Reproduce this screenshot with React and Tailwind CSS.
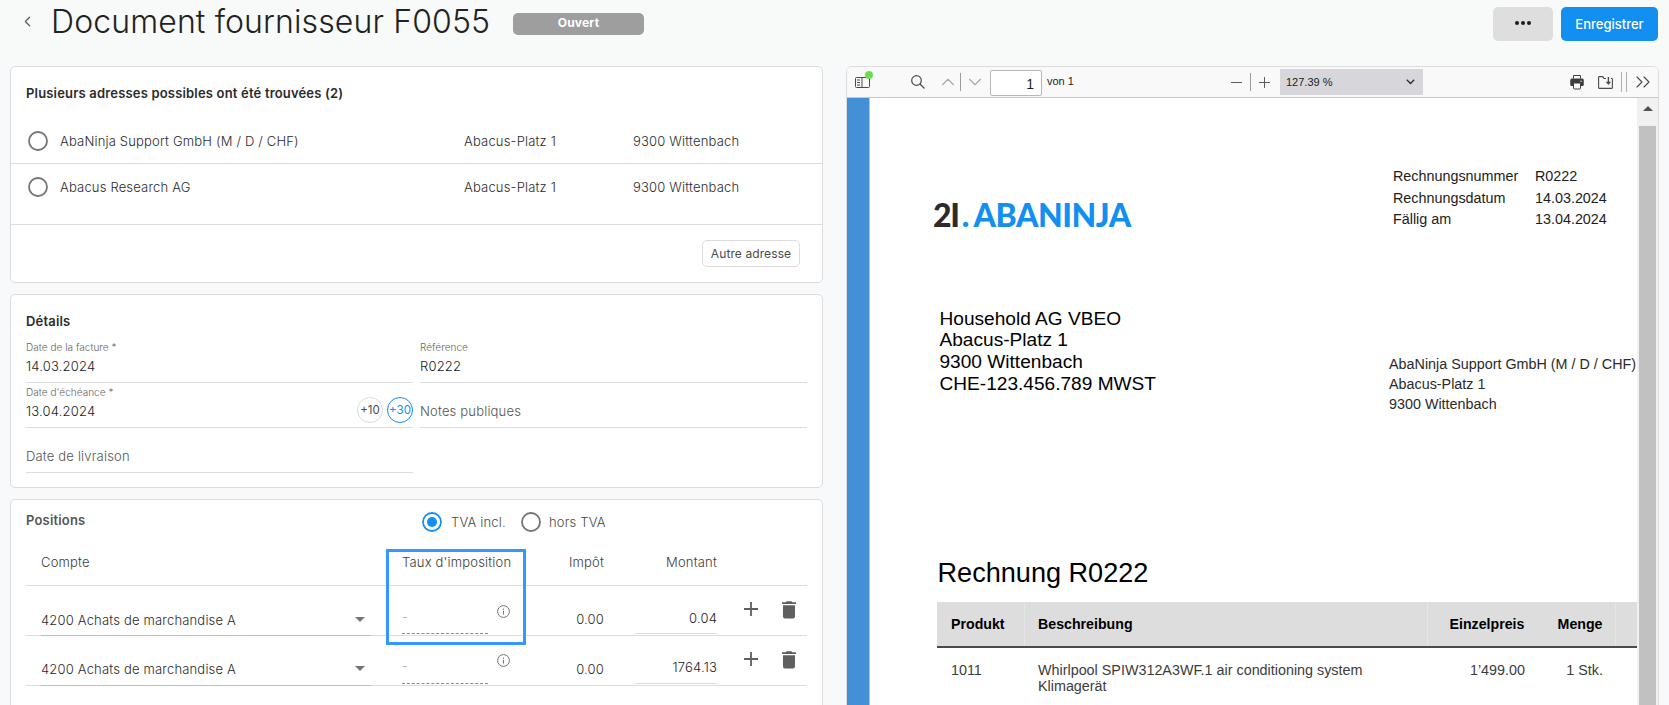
import React from 'react';
import { ChevronLeft, ChevronUp, ChevronDown, ChevronsRight } from 'lucide-react';

const addresses = [
  { id: 1, name: 'AbaNinja Support GmbH (M / D / CHF)', street: 'Abacus-Platz 1', city: '9300 Wittenbach' },
  { id: 2, name: 'Abacus Research AG', street: 'Abacus-Platz 1', city: '9300 Wittenbach' },
];

const positions = [
  { id: 1, account: '4200 Achats de marchandise A', tax: '0.00', amount: '0.04' },
  { id: 2, account: '4200 Achats de marchandise A', tax: '0.00', amount: '1764.13' },
];

const Radio = ({ checked }) => (
  <svg viewBox="0 0 24 24" className={`size-6 shrink-0 ${checked ? 'text-[#138ff2]' : 'text-[#757575]'}`}>
    <circle cx="12" cy="12" r="9" fill="none" stroke="currentColor" strokeWidth="1.8" />
    {checked && <circle cx="12" cy="12" r="5" fill="currentColor" />}
  </svg>
);

const Field = ({ label, value, placeholder, children }) => (
  <div className="flex h-[45px] items-end justify-between border-b border-[#dcdcdc]">
    <div className="pb-[6px]">
      {label && <div className="mb-[2px] text-[10px] leading-[14px] tracking-[0.04px] text-[#666]">{label}</div>}
      <div className={`leading-5 ${placeholder ? 'text-[#555]' : 'text-[#1c1c1c]'}`}>{value || placeholder}</div>
    </div>
    {children}
  </div>
);

const InfoIcon = () => (
  <svg viewBox="0 0 13 13" className="size-[13px]" fill="none" stroke="#757575">
    <circle cx="6.5" cy="6.5" r="5.9" strokeWidth="1" />
    <path d="M6.5 5.7v3.8M6.5 3.5v1.2" strokeWidth="1.1" />
  </svg>
);

const TrashIcon = () => (
  <svg viewBox="0 0 14 18" className="h-[18px] w-[14px]" fill="#5f5f5f">
    <path d="M0 1.2h3.6L4.6.2h4.8l1 1H14v1.9H0zM1 4.3h12v11.2a2 2 0 0 1-2 2H3a2 2 0 0 1-2-2z" />
  </svg>
);

const PlusIcon = () => (
  <svg viewBox="0 0 14 14" className="size-[14px]" stroke="#5f5f5f" strokeWidth="1.8">
    <path d="M7 0v14M0 7h14" />
  </svg>
);

const AddressCard = () => (
  <section className="h-[217px] rounded-[5px] border border-[#dcdcdc] bg-white">
    <h2 className="px-[15px] pt-4 font-semibold leading-5 text-[#2b2b2b]">
      Plusieurs adresses possibles ont été trouvées (2)
    </h2>
    <div className="mt-4 border-b border-[#dcdcdc] pb-[15px]">
      {addresses.map((a, i) => (
        <div
          key={a.id}
          className={`grid h-[45px] grid-cols-[34px_404px_169px_1fr] items-center pl-[15px] leading-5 text-[#2b2b2b] ${i === 0 ? 'border-b border-[#dcdcdc]' : ''}`}
        >
          <Radio />
          <span>{a.name}</span>
          <span>{a.street}</span>
          <span>{a.city}</span>
        </div>
      ))}
    </div>
    <div className="flex justify-end pr-[22px] pt-[15px]">
      <button className="h-[27px] w-[98px] rounded-[5px] border border-[#dcdcdc] text-[12px] font-normal tracking-[0.1px] text-[#4a4a4a]">
        Autre adresse
      </button>
    </div>
  </section>
);

const DetailsCard = () => (
  <section className="h-[194px] rounded-[5px] border border-[#dcdcdc] bg-white px-[15px] pt-4">
    <h2 className="font-semibold leading-5 text-[#2b2b2b]">Détails</h2>
    <div className="mt-[7px] grid grid-cols-[387px_387px] gap-x-[7px]">
      <Field label="Date de la facture *" value="14.03.2024" />
      <Field label="Référence" value="R0222" />
      <Field label="Date d'échéance *" value="13.04.2024">
        <div className="flex gap-1 pb-1 text-[11.5px] font-normal tracking-normal">
          <span className="flex size-[26px] items-center justify-center rounded-full border border-[#dcdcdc] pt-px text-[#4a4a4a]">+10</span>
          <span className="flex size-[26px] items-center justify-center rounded-full border border-[#138ff2] pt-px text-[#138ff2]">+30</span>
        </div>
      </Field>
      <Field placeholder="Notes publiques" />
      <Field placeholder="Date de livraison" />
    </div>
  </section>
);

const columns = 'grid grid-cols-[345px_131px_87px_31px_82px_1fr] pl-[15px]';

const PositionsCard = () => (
  <section className="relative h-[240px] rounded-[5px] border border-[#dcdcdc] bg-white px-[15px]">
    <div className="flex h-10 items-center text-[#4a4a4a]">
      <h2 className="mt-px w-[394px] font-semibold text-[#555]">Positions</h2>
      <div className="mt-1 flex items-center">
        <Radio checked />
        <span className="ml-[7px] mt-px w-[68px]">TVA incl.</span>
        <Radio />
        <span className="ml-[6px] mt-px">hors TVA</span>
      </div>
    </div>

    <div className={`${columns} h-[46px] items-center border-b border-[#dcdcdc] pt-px text-[#3c3c3c]`}>
      <span>Compte</span>
      <span className="pl-4 whitespace-nowrap">Taux d'imposition</span>
      <span className="text-right">Impôt</span>
      <span />
      <span className="text-right">Montant</span>
    </div>

    {positions.map((p, i) => (
      <div key={p.id} className={`${columns} h-[50px] border-b border-[#dcdcdc] text-[#2b2b2b]`}>
        <div className={`-mb-px mr-[15px] flex justify-between border-b border-[#bdbdbd] ${i === 0 ? 'pt-6' : 'pt-[23px]'}`}>
          <span className="leading-5">{p.account}</span>
          <svg viewBox="0 0 10 5" className="mr-[6px] mt-[7px] h-[5px] w-[10px]" fill="#757575">
            <path d="M0 0h10L5 5z" />
          </svg>
        </div>
        <div className={`flex justify-between pl-4 pr-[7px] ${i === 0 ? 'pt-[19px]' : 'pt-[18px]'}`}>
          <div className="mb-[1px] w-[86px] border-b border-dashed border-[#8c8c8c] leading-6 text-[#aaa]">-</div>
          <InfoIcon />
        </div>
        <span className="pt-[23px] text-right leading-5">{p.tax}</span>
        <span />
        <span className={`mb-px border-b border-[#dcdcdc] text-right leading-5 text-[#1c1c1c] ${i === 0 ? 'pt-[22px]' : 'pt-[21px]'}`}>
          {p.amount}
        </span>
        <div className="flex gap-6 pl-[27px] pt-[15px]">
          <div className="pt-px">
            <PlusIcon />
          </div>
          <TrashIcon />
        </div>
      </div>
    ))}

    {/* Cadre autour du taux d'imposition */}
    <div className="absolute left-[375px] top-[49px] h-[96px] w-[140px] border-[3px] border-[#3399ff]" />
  </section>
);

const Toolbar = () => (
  <div className="flex h-[31px] items-center border-b border-[#c8c8c8] bg-[#f9f9fa] font-['Liberation_Sans',sans-serif] text-[11px] font-normal tracking-normal text-[#1c1c1c]">
    <div className="relative ml-2 h-[11px] w-[15px]">
      <svg viewBox="0 0 15 11" className="h-[11px] w-[15px]" fill="none" stroke="#4a4a4a">
        <rect x=".5" y=".5" width="14" height="10" rx="1" />
        <path d="M7 0v11M2 3h3M2 5.5h3M2 8h3" />
      </svg>
      <span className="absolute -right-[3px] -top-[6px] size-2 rounded-full bg-[#70db55]" />
    </div>
    <svg viewBox="0 0 14 14" className="ml-[41px] size-[14px]" fill="none" stroke="#4a4a4a" strokeWidth="1.2">
      <circle cx="5.5" cy="5.5" r="4.8" />
      <path d="M9 9l4.5 4.5" />
    </svg>
    <ChevronUp className="ml-3 h-[22px] w-[22px] text-[#a8a8a8]" strokeWidth={1.2} />
    <span className="ml-[1px] h-[18px] w-px bg-[#9c9c9c]" />
    <ChevronDown className="ml-[3px] h-[22px] w-[22px] text-[#a8a8a8]" strokeWidth={1.2} />
    <div className="ml-1 mt-[2px] flex h-[26px] w-[52px] items-center justify-end rounded-[2px] border border-[#b8b8bb] bg-white pr-[7px] pt-[2px] text-[14px]">1</div>
    <span className="-mt-px ml-[5px] w-[184px]">von 1</span>
    <span className="mt-px h-px w-[11px] bg-[#5c5c5c]" />
    <span className="ml-2 h-[18px] w-px bg-[#9c9c9c]" />
    <svg viewBox="0 0 11 11" className="ml-2 mt-px size-[11px]" stroke="#5c5c5c">
      <path d="M5.5 0v11M0 5.5h11" />
    </svg>
    <div className="ml-[10px] flex h-[26px] w-[143px] items-center justify-between bg-[#d7d7db] pl-[6px] pr-2">
      <span>127.39 %</span>
      <svg viewBox="0 0 9 6" className="h-[6px] w-[9px]" fill="none" stroke="#2b2b2b" strokeWidth="1.3">
        <path d="M.8.8l3.7 3.7L8.2.8" />
      </svg>
    </div>
    <svg viewBox="0 0 14 16" className="ml-[147px] h-4 w-[14px]">
      <path d="M3.5 4.5V1.5h7v3M1 5h12v6.5H1z" fill="none" stroke="#3c3c3c" strokeLinejoin="round" />
      <rect x=".5" y="5" width="13" height="7" rx="1.5" fill="#3c3c3c" />
      <rect x="3.5" y="9" width="7" height="6" rx="1" fill="#f9f9fa" stroke="#3c3c3c" />
      <circle cx="11" cy="7.3" r=".7" fill="#f9f9fa" />
    </svg>
    <svg viewBox="0 0 15 13" className="ml-[14px] h-[13px] w-[15px]" fill="none" stroke="#4a4a4a" strokeWidth="1.1">
      <path d="M8 2.5H6L4.8.6H1.2a.6.6 0 0 0-.6.6v10.6c0 .4.2.6.6.6h12.6c.4 0 .6-.2.6-.6V3.1c0-.4-.2-.6-.6-.6H13" />
      <path d="M10.4 1v6" strokeWidth="1.4" />
      <path d="M7.7 5.8h5.4L10.4 9z" fill="#4a4a4a" stroke="none" />
    </svg>
    <span className="ml-2 h-5 w-px bg-[#b0b0b0]" />
    <span className="ml-1 h-5 w-px bg-[#b0b0b0]" />
    <ChevronsRight className="ml-1 h-6 w-6 text-[#4a4a4a]" strokeWidth={1.1} />
  </div>
);

const Invoice = () => (
  <div className="w-[767px] shrink-0 overflow-hidden bg-white font-['Liberation_Sans',sans-serif] text-[14.35px] font-normal tracking-normal text-black">
    <div className="flex h-[194px] items-start justify-between pt-[68px]">
      <div className="mt-[30px] flex whitespace-nowrap pl-[63px] font-['Lato',sans-serif] text-[32px] font-black leading-[38px]">
        <span className="tracking-[-1.2px] text-[#2b2b2b]">2I</span>
        <span className="ml-[3px] text-[#138ff2]">.</span>
        <span className="ml-[4px] tracking-[-0.45px] text-[#138ff2]">ABANINJA</span>
      </div>
      <div className="grid w-[244px] grid-cols-[142px_1fr] leading-[21.7px] text-[#1c1c1c]">
        <span>Rechnungsnummer</span>
        <span>R0222</span>
        <span>Rechnungsdatum</span>
        <span>14.03.2024</span>
        <span>Fällig am</span>
        <span>13.04.2024</span>
      </div>
    </div>

    <div className="flex h-[258px] justify-between">
      <div className="pl-[69.5px] pt-[15.7px] text-[19.1px] leading-[21.7px]">
        <div>Household AG VBEO</div>
        <div>Abacus-Platz 1</div>
        <div>9300 Wittenbach</div>
        <div>CHE-123.456.789 MWST</div>
      </div>
      <div className="w-[248px] whitespace-nowrap pt-[62px] leading-5 text-[#2b2b2b]">
        <div>AbaNinja Support GmbH (M / D / CHF)</div>
        <div>Abacus-Platz 1</div>
        <div>9300 Wittenbach</div>
      </div>
    </div>

    <h1 className="h-[52px] pl-[67.5px] pt-[7px] text-[27.1px] leading-8">Rechnung R0222</h1>

    <div className="ml-[67px]">
      <div className="grid h-[46px] grid-cols-[88px_403px_188px_1fr] border-b-2 border-[#4a4a4a] bg-[#ddd] text-[14.2px] font-bold leading-[44px]">
        <span className="border-r border-[#e6e6e6] pl-[14px]">Produkt</span>
        <span className="border-r border-[#e6e6e6] pl-[13px]">Beschreibung</span>
        <span className="flex justify-between border-r border-[#e6e6e6] pl-[21.5px] pr-[12.5px]">
          <span>Einzelpreis</span>
          <span>Menge</span>
        </span>
        <span />
      </div>
      <div className="grid grid-cols-[88px_403px_188px_1fr] pt-[14px] leading-4 text-[#3c3c3c]">
        <span className="pl-[14px]">1011</span>
        <span className="pl-[13px]">
          Whirlpool SPIW312A3WF.1 air conditioning system
          <br />
          Klimagerät
        </span>
        <span className="grid grid-cols-[97px_1fr] pr-[13px] text-right">
          <span>1’499.00</span>
          <span>1 Stk.</span>
        </span>
      </div>
    </div>
  </div>
);

const PdfViewer = () => (
  <section className="h-[660px] w-[813px] shrink-0 overflow-hidden rounded-t-[6px] border border-[#dcdcdc] bg-white">
    <Toolbar />
    <div className="flex h-[640px]">
      <div className="w-[23px] shrink-0 border-r border-[#a9c9ea] bg-[#4390d6]" />
      <Invoice />
      <div className="flex w-[21px] shrink-0 flex-col items-center bg-[#f1f1f1]">
        <svg viewBox="0 0 10 5" className="mb-[15px] mt-2 h-[5px] w-[10px] shrink-0" fill="#505050">
          <path d="M0 5h10L5 0z" />
        </svg>
        <div className="w-[17px] grow bg-[#c1c1c1]" />
      </div>
    </div>
  </section>
);

export default function App() {
  return (
    <div className="h-[705px] w-[1669px] overflow-hidden bg-[#f8f9fb] font-['Inter',sans-serif] text-[13px] font-light tracking-[0.18px]">
      <header className="flex h-[66px] items-start bg-[#f8faf9]">
        <ChevronLeft className="ml-[19px] mt-[13px] size-[17px] text-[#5f5f5f]" strokeWidth={1.8} />
        <h1 className="ml-[15px] w-[462px] whitespace-nowrap text-[32px] font-light leading-[43px] tracking-[0.12px] text-[#1f2222]">
          Document fournisseur F0055
        </h1>
        <span className="mt-[13px] flex h-[22px] w-[131px] items-center justify-center rounded-[5px] bg-[#9e9e9e] pb-[3px] text-[12px] font-bold text-white">
          Ouvert
        </span>
        <div className="ml-auto mr-[11px] mt-[7px] flex gap-2">
          <button className="flex h-[34px] w-[60px] items-center justify-center gap-[2px] rounded-[5px] bg-[#dedede] pb-[2px]">
            <span className="size-1 rounded-full bg-[#1c1c1c]" />
            <span className="size-1 rounded-full bg-[#1c1c1c]" />
            <span className="size-1 rounded-full bg-[#1c1c1c]" />
          </button>
          <button className="h-[34px] w-[97px] rounded-[5px] bg-[#138ff2] pt-px font-medium tracking-normal text-white">
            Enregistrer
          </button>
        </div>
      </header>
      <main className="flex gap-[23px] pl-[10px]">
        <div className="flex w-[813px] shrink-0 flex-col gap-[11px]">
          <AddressCard />
          <DetailsCard />
          <PositionsCard />
        </div>
        <PdfViewer />
      </main>
    </div>
  );
}
